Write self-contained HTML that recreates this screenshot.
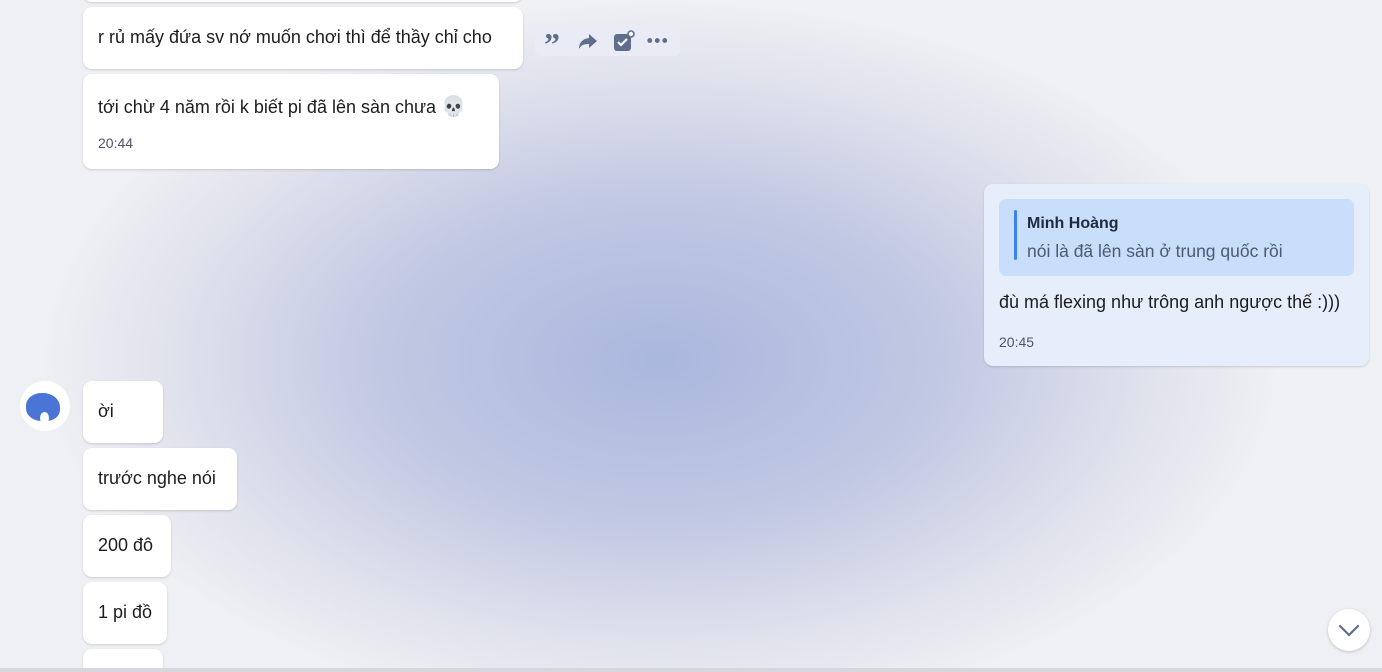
<!DOCTYPE html>
<html style="height:672px;overflow:hidden"><head><meta charset="utf-8"><style>
body{margin:0;width:1382px;height:672px;overflow:hidden;position:relative;font-family:"Liberation Sans","Noto Sans CJK SC",sans-serif;
background:radial-gradient(ellipse 620px 360px at 660px 360px,#aab7de 0%,#c1c8e3 45%,#dfe1ec 78%,#eff0f3 100%);}
.b{position:absolute;background:#fff;border-radius:9px;box-shadow:0 1px 2px rgba(0,0,0,.15);color:#1d1d1f;font-size:18px;box-sizing:border-box;padding:0 15px;white-space:nowrap}
.t{position:absolute;left:15px;font-size:14px;color:#4c5566}
</style></head><body>
<div class="b" style="left:83px;top:-20px;width:440px;height:22px"></div>
<div class="b" style="left:83px;top:7px;width:440px;height:62px;line-height:60px">r rủ mấy đứa sv nớ muốn chơi thì để thầy chỉ cho</div>
<div style="position:absolute;left:535px;top:26px;width:145px;height:30px;background:#e9ecf4;border-radius:6px"></div>
<div style="position:absolute;left:544px;top:28px;font:bold 32px/32px 'Liberation Serif',serif;color:#5f6e8c">&#8221;</div>
<svg style="position:absolute;left:578px;top:32px" width="20" height="18" viewBox="0 0 20 18"><path d="M11 2l8 7-8 7v-4c-5 0-8 1-10 5 0-6 3-10 10-11z" fill="#5f6e8c"/></svg>
<svg style="position:absolute;left:612px;top:29px" width="24" height="24" viewBox="0 0 24 24"><rect x="2" y="5" width="17" height="17" rx="3" fill="#5f6e8c"/><path d="M6 13l3 3 6-6" stroke="#fff" stroke-width="2.2" fill="none"/><circle cx="19" cy="5" r="3" fill="#fff" stroke="#5f6e8c" stroke-width="1.6"/></svg>
<div style="position:absolute;left:646px;top:38px;width:22px;height:5px;background:radial-gradient(circle,#5f6e8c 2.2px,transparent 2.6px) 0 0/7.5px 5px repeat-x"></div>
<div class="b" style="left:83px;top:74px;width:416px;height:95px"><div style="position:absolute;top:20px;left:15px">tới chừ 4 năm rồi k biết pi đã lên sàn chưa <span style="font-size:20px;color:#888">💀</span></div><div class="t" style="top:61px">20:44</div></div>
<div class="b" style="left:984px;top:184px;width:385px;height:182px;background:#e6eefc">
<div style="position:absolute;left:15px;top:15px;width:355px;height:77px;background:#c9defb;border-radius:7px">
<div style="position:absolute;left:15px;top:11px;width:3px;height:50px;background:#3b82f6;border-radius:2px"></div>
<div style="position:absolute;left:28px;top:16px;font-size:16px;font-weight:bold;color:#1f2a3d">Minh Hoàng</div>
<div style="position:absolute;left:28px;top:42px;font-size:17.5px;color:#4c5a70">nói là đã lên sàn ở trung quốc rồi</div></div>
<div style="position:absolute;left:15px;top:108px">đù má flexing như trông anh ngược thế :)))</div>
<div class="t" style="top:150px">20:45</div></div>
<div style="position:absolute;left:20px;top:381px;width:50px;height:50px;border-radius:50%;background:#fff;overflow:hidden">
<div style="position:absolute;left:6px;top:12px;width:34px;height:28px;background:#4a74d6;border-radius:45% 50% 40% 45%"></div>
<div style="position:absolute;left:20px;top:31px;width:9px;height:12px;background:#fff;border-radius:50%"></div></div>
<div class="b" style="left:83px;top:381px;width:80px;height:62px;line-height:60px">ời</div>
<div class="b" style="left:83px;top:448px;width:154px;height:62px;line-height:60px">trước nghe nói</div>
<div class="b" style="left:83px;top:515px;width:88px;height:62px;line-height:60px">200 đô</div>
<div class="b" style="left:83px;top:582px;width:84px;height:62px;line-height:60px">1 pi đồ</div>
<div class="b" style="left:83px;top:649px;width:80px;height:19px;border-radius:9px 9px 0 0"></div>
<div style="position:absolute;left:0;top:668px;width:1382px;height:4px;background:#d6d7dc"></div>
<div style="position:absolute;left:1328px;top:609px;width:42px;height:42px;border-radius:50%;background:#fff;box-shadow:0 1px 3px rgba(0,0,0,.2)">
<svg width="42" height="42"><path d="M12 17l9 9 9-9" stroke="#5f6e8c" stroke-width="2.2" fill="none" stroke-linecap="round"/></svg></div>
</body></html>
